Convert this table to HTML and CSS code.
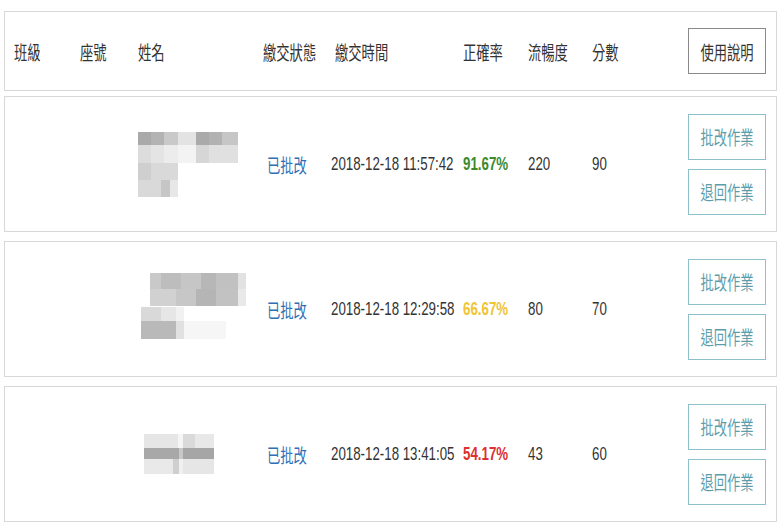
FILE: index.html
```html
<!DOCTYPE html>
<html lang="zh-Hant">
<head>
<meta charset="utf-8">
<title>作業列表</title>
<link rel="stylesheet" href="styles.css">
</head>
<body>
<div class="page">
  <div class="grid head">
    <span class="t">班級</span>
    <span class="t">座號</span>
    <span class="t">姓名</span>
    <span class="t">繳交狀態</span>
    <span class="t time-h">繳交時間</span>
    <span class="t">正確率</span>
    <span class="t">流暢度</span>
    <span class="t">分數</span>
    <button class="help"><span class="t c">使用說明</span></button>
  </div>

  <div class="grid rec">
    <span></span>
    <span></span>
    <span class="name">
      <svg class="mosaic" width="110" height="65" viewBox="0 0 110 65">
        <rect x="0" y="0" width="13" height="13" fill="#a9a9a9"/>
        <rect x="13" y="0" width="13" height="13" fill="#b3b3b3"/>
        <rect x="26" y="0" width="14" height="13" fill="#c9c9c9"/>
        <rect x="40" y="0" width="18" height="13" fill="#e3e3e3"/>
        <rect x="58" y="0" width="13" height="13" fill="#aaaaaa"/>
        <rect x="71" y="0" width="13" height="13" fill="#b2b2b2"/>
        <rect x="84" y="0" width="16" height="13" fill="#c6c6c6"/>
        <rect x="0" y="13" width="13" height="18" fill="#dcdcdc"/>
        <rect x="13" y="13" width="13" height="18" fill="#e4e4e4"/>
        <rect x="26" y="13" width="14" height="18" fill="#ececec"/>
        <rect x="40" y="13" width="18" height="18" fill="#f3f3f3"/>
        <rect x="58" y="13" width="13" height="18" fill="#d6d6d6"/>
        <rect x="71" y="13" width="29" height="18" fill="#e0e0e0"/>
        <rect x="0" y="31" width="13" height="17" fill="#cfcfcf"/>
        <rect x="13" y="31" width="27" height="17" fill="#d9d9d9"/>
        <rect x="0" y="48" width="23" height="17" fill="#d9d9d9"/>
        <rect x="23" y="48" width="9" height="17" fill="#c6c6c6"/>
        <rect x="32" y="48" width="8" height="17" fill="#e7e7e7"/>
      </svg>
    </span>
    <span class="t status">已批改</span>
    <span class="t">2018-12-18 11:57:42</span>
    <span class="t rate good">91.67%</span>
    <span class="t">220</span>
    <span class="t">90</span>
    <div class="actions">
      <button class="act"><span class="t c">批改作業</span></button>
      <button class="act"><span class="t c">退回作業</span></button>
    </div>
  </div>

  <div class="grid rec">
    <span></span>
    <span></span>
    <span class="name">
      <svg class="mosaic" width="108" height="73" viewBox="0 0 108 73">
        <rect x="12" y="0" width="11" height="16" fill="#c9c9c9"/>
        <rect x="23" y="0" width="20" height="16" fill="#bdbdbd"/>
        <rect x="43" y="0" width="20" height="16" fill="#c6c6c6"/>
        <rect x="63" y="0" width="15" height="16" fill="#b7b7b7"/>
        <rect x="78" y="0" width="22" height="16" fill="#c1c1c1"/>
        <rect x="100" y="0" width="8" height="16" fill="#e2e2e2"/>
        <rect x="12" y="16" width="26" height="17" fill="#d1d1d1"/>
        <rect x="38" y="16" width="20" height="17" fill="#c7c7c7"/>
        <rect x="58" y="16" width="20" height="17" fill="#b5b5b5"/>
        <rect x="78" y="16" width="22" height="17" fill="#c2c2c2"/>
        <rect x="100" y="16" width="8" height="17" fill="#e9e9e9"/>
        <rect x="3" y="34" width="20" height="14" fill="#d9d9d9"/>
        <rect x="23" y="34" width="15" height="14" fill="#e6e6e6"/>
        <rect x="38" y="34" width="8" height="14" fill="#f1f1f1"/>
        <rect x="3" y="48" width="35" height="18" fill="#b9b9b9"/>
        <rect x="38" y="48" width="8" height="18" fill="#e1e1e1"/>
        <rect x="46" y="48" width="42" height="18" fill="#f6f6f6"/>
      </svg>
    </span>
    <span class="t status">已批改</span>
    <span class="t">2018-12-18 12:29:58</span>
    <span class="t rate mid">66.67%</span>
    <span class="t">80</span>
    <span class="t">70</span>
    <div class="actions">
      <button class="act"><span class="t c">批改作業</span></button>
      <button class="act"><span class="t c">退回作業</span></button>
    </div>
  </div>

  <div class="grid rec">
    <span></span>
    <span></span>
    <span class="name">
      <svg class="mosaic" width="80" height="40" viewBox="0 0 80 40">
        <rect x="6" y="0" width="34" height="14" fill="#e6e6e6"/>
        <rect x="40" y="0" width="5" height="14" fill="#f5f5f5"/>
        <rect x="45" y="0" width="12" height="14" fill="#dadada"/>
        <rect x="57" y="0" width="19" height="14" fill="#e8e8e8"/>
        <rect x="6" y="14" width="35" height="11" fill="#a8a8a8"/>
        <rect x="41" y="14" width="4" height="11" fill="#c8c8c8"/>
        <rect x="45" y="14" width="31" height="11" fill="#a6a6a6"/>
        <rect x="6" y="25" width="29" height="15" fill="#e9e9e9"/>
        <rect x="35" y="25" width="6" height="15" fill="#cfcfcf"/>
        <rect x="41" y="25" width="4" height="15" fill="#f0f0f0"/>
        <rect x="45" y="25" width="31" height="15" fill="#e6e6e6"/>
      </svg>
    </span>
    <span class="t status">已批改</span>
    <span class="t">2018-12-18 13:41:05</span>
    <span class="t rate bad">54.17%</span>
    <span class="t">43</span>
    <span class="t">60</span>
    <div class="actions">
      <button class="act"><span class="t c">批改作業</span></button>
      <button class="act"><span class="t c">退回作業</span></button>
    </div>
  </div>
</div>
</body>
</html>
```

FILE: styles.css
```css
html, body {
  margin: 0;
  padding: 0;
  background: #ffffff;
  overflow: hidden;
}

.page {
  padding: 11px 4px 0 4px;
  font-family: "Liberation Sans", "Noto Sans CJK TC", sans-serif;
  font-size: 19px;
  color: #333333;
}

/* the source screenshot is horizontally condensed */
.t {
  display: inline-block;
  justify-self: start;
  white-space: nowrap;
  transform: scaleX(0.7);
  transform-origin: 0 50%;
}

.t.c {
  transform-origin: 50% 50%;
}

.grid {
  display: grid;
  grid-template-columns: 66px 58px 125px 68px 132px 65px 64px 96px 79px;
  align-items: center;
  width: 773px;
  box-sizing: border-box;
  padding: 0 9px;
  background: #ffffff;
  border: 1px solid #d8d8d8;
}

.head {
  height: 80px;
  margin-bottom: 5px;
}

.rec {
  height: 136px;
  margin-bottom: 9px;
}

.time-h {
  margin-left: 4px;
}

.name {
  display: flex;
  align-items: center;
}

.mosaic {
  display: block;
}

.status {
  margin-left: 4px;
  color: #2f6fb5;
}

.rate {
  font-weight: bold;
}

.good { color: #3b8a2b; }
.mid  { color: #f0c433; }
.bad  { color: #dd3030; }

button {
  font: inherit;
  background: #ffffff;
  margin: 0;
  padding: 0;
  cursor: pointer;
  display: flex;
  align-items: center;
  justify-content: center;
  overflow: visible;
}

.help {
  width: 78px;
  height: 46px;
  color: #333333;
  border: 1px solid #8a8a8a;
}

.actions {
  display: flex;
  flex-direction: column;
  gap: 9px;
}

.act {
  width: 78px;
  height: 46px;
  color: #5c9dac;
  border: 1px solid #8cc1cc;
}
```
